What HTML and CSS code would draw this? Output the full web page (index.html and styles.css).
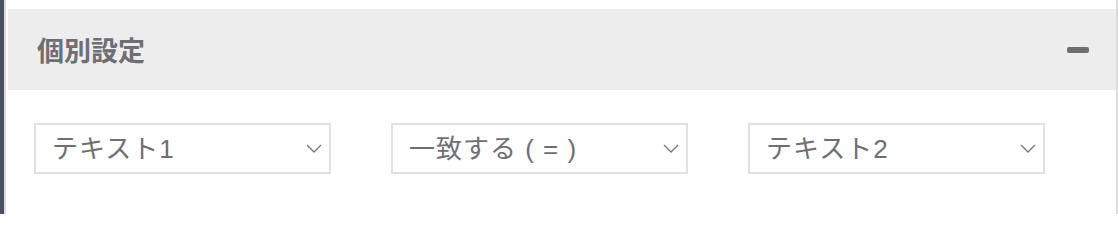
FILE: index.html
```html
<!DOCTYPE html>
<html lang="ja">
<head>
<meta charset="utf-8">
<link rel="stylesheet" href="styles.css">
</head>
<body>
<div class="app">
  <div class="sidebar"></div>
  <div class="panel">
    <div class="header">
      <h2 class="title">個別設定</h2>
      <span class="minus"></span>
    </div>
    <div class="content">
      <div class="select"><span class="label">テキスト1</span>
        <svg class="chev" viewBox="0 0 16 9" width="16" height="9"><path d="M1 1 L8 8 L15 1" fill="none" stroke="#777" stroke-width="1.3"/></svg>
      </div>
      <div class="select"><span class="label">一致する ( = )</span>
        <svg class="chev" viewBox="0 0 16 9" width="16" height="9"><path d="M1 1 L8 8 L15 1" fill="none" stroke="#777" stroke-width="1.3"/></svg>
      </div>
      <div class="select"><span class="label">テキスト2</span>
        <svg class="chev" viewBox="0 0 16 9" width="16" height="9"><path d="M1 1 L8 8 L15 1" fill="none" stroke="#777" stroke-width="1.3"/></svg>
      </div>
    </div>
  </div>
</div>
</body>
</html>
```
FILE: styles.css
```css
html, body {
  margin: 0;
  padding: 0;
  background: #ffffff;
}
body {
  font-family: "Liberation Sans", "Noto Sans CJK JP", sans-serif;
  color: #6e6e73;
}
.app {
  display: flex;
  height: 214px;
}
.sidebar {
  width: 4px;
  background: #4b5163;
}
.panel {
  flex: 1;
  border-left: 2px solid #dcdcdc;
  border-right: 2px solid #dcdcdc;
  padding: 9px 0 0 2px;
}
.header {
  height: 81px;
  background: #ededed;
  display: flex;
  align-items: center;
  justify-content: space-between;
  padding: 0 27px 0 29px;
}
.title {
  margin: 0;
  font-family: "Noto Sans CJK JP", sans-serif;
  font-size: 27px;
  font-weight: 700;
  color: #6e6e73;
  line-height: 1;
}
.minus {
  width: 22px;
  height: 6px;
  border-radius: 2px;
  background: #6e6e73;
}
.content {
  display: flex;
  gap: 60px;
  padding: 33px 0 0 26px;
}
.select {
  box-sizing: border-box;
  width: 297px;
  height: 51px;
  border: 2px solid #e0e0e0;
  display: flex;
  align-items: center;
  justify-content: space-between;
  padding: 0 7px 0 16px;
}
.label {
  font-size: 26px;
  line-height: 1;
  letter-spacing: 1px;
  color: #6e6e73;
}
.chev {
  display: block;
}
```
